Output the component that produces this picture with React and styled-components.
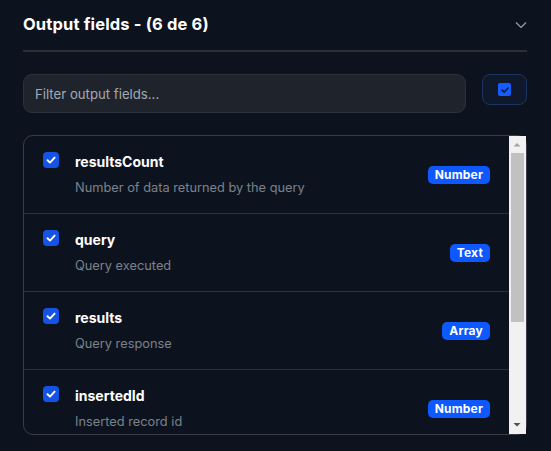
import React from "react";
import styled, { createGlobalStyle } from "styled-components";

const GlobalStyle = createGlobalStyle`
  html, body { margin: 0; padding: 0; background: #0d131e; }
  body { font-family: Inter, "Noto Sans", sans-serif; color: #fff; }
  * { box-sizing: border-box; }
`;

const Panel = styled.div`
  width: 551px;
  height: 451px;
  padding: 0 24px 0 23px;
  background: #0d131e;
  display: flex;
  flex-direction: column;
`;

const Header = styled.div`
  height: 52px;
  padding-bottom: 3px;
  display: flex;
  align-items: center;
  justify-content: space-between;
  border-bottom: 2px solid #2c2f33;
`;

const Title = styled.h2`
  margin: 0;
  font-size: 16.5px;
  font-weight: 700;
  letter-spacing: 0.15px;
  color: #ffffff;
`;

const Chevron = styled.svg`
  width: 12px;
  height: 8px;
  margin: 2px 0 0 0;
`;

const FilterRow = styled.div`
  margin-top: 22px;
  display: flex;
  align-items: flex-start;
  gap: 16px;
`;

const FilterInput = styled.input`
  flex: 1;
  height: 39px;
  border-radius: 9px;
  border: 1px solid #2b3139;
  background: #1f242c;
  padding: 0 11px;
  font-family: inherit;
  font-size: 13.2px;
  color: #fff;
  outline: none;
  &::placeholder { color: #a3aab4; }
`;

const ToggleAll = styled.button`
  width: 45px;
  height: 31px;
  border-radius: 8px;
  border: 1px solid #1d3563;
  background: #0f192b;
  display: flex;
  align-items: center;
  justify-content: center;
  padding: 0;
`;

const SmallCheck = styled.span`
  width: 13px;
  height: 13px;
  border-radius: 2px;
  background: #165dff;
  display: flex;
  align-items: center;
  justify-content: center;
`;

const ListFrame = styled.div`
  margin-top: 22px;
  height: 300px;
  border: 1px solid #3a3e44;
  border-radius: 10px;
  display: flex;
`;

const Rows = styled.div`
  flex: 1;
  min-width: 0;
  overflow: hidden;
`;

const ScrollBar = styled.div`
  width: 17px;
  flex: none;
  background: #f1f1f1;
  display: flex;
  flex-direction: column;
`;

const ScrollButton = styled.svg`
  width: 17px;
  height: 17px;
  flex: none;
  display: block;
`;

const Track = styled.div`
  flex: 1;
  padding: 0 2px;
`;

const Thumb = styled.div`
  height: 169px;
  background: #c1c1c1;
`;

const Row = styled.div`
  display: flex;
  align-items: center;
  padding: 16px 19px 16px 19px;
  border-bottom: 1px solid #2d3136;
  &:last-child { border-bottom: none; }
`;

const CheckBox = styled.span`
  width: 16px;
  height: 16px;
  border-radius: 4px;
  background: #1553e6;
  display: flex;
  align-items: center;
  justify-content: center;
  align-self: flex-start;
  flex: none;
`;

const Info = styled.div`
  flex: 1;
  margin-left: 16px;
  display: flex;
  flex-direction: column;
  gap: 7px;
`;

const Name = styled.div`
  font-size: 14px;
  font-weight: 700;
  line-height: 20px;
  color: #ffffff;
`;

const Desc = styled.div`
  font-size: 12.8px;
  line-height: 18px;
  color: #7b828b;
`;

const Badge = styled.span`
  height: 18px;
  padding: 0 7px;
  border-radius: 5px;
  background: #0d58ff;
  color: #fff;
  font-size: 12px;
  font-weight: 700;
  line-height: 18px;
  letter-spacing: 0.2px;
  flex: none;
`;

const fields = [
  { name: "resultsCount", desc: "Number of data returned by the query", type: "Number" },
  { name: "query", desc: "Query executed", type: "Text" },
  { name: "results", desc: "Query response", type: "Array" },
  { name: "insertedId", desc: "Inserted record id", type: "Number" },
];

const Tick = ({ color, size }) => (
  <svg width={size} height={size} viewBox="0 0 12 12" fill="none">
    <path d="M2.5 6.2 L5 8.6 L9.6 3.6" stroke={color} strokeWidth="1.9" strokeLinecap="round" strokeLinejoin="round" />
  </svg>
);

export default function App() {
  return (
    <>
      <GlobalStyle />
      <Panel>
        <Header>
          <Title>Output fields - (6 de 6)</Title>
          <Chevron viewBox="0 0 12 8" fill="none">
            <path d="M1 1.5 L6 6.5 L11 1.5" stroke="#9aa1aa" strokeWidth="1.2" />
          </Chevron>
        </Header>
        <FilterRow>
          <FilterInput placeholder="Filter output fields..." />
          <ToggleAll>
            <SmallCheck>
              <Tick color="#0c1a33" size={10} />
            </SmallCheck>
          </ToggleAll>
        </FilterRow>
        <ListFrame>
          <Rows>
            {fields.map((f) => (
              <Row key={f.name}>
                <CheckBox>
                  <Tick color="#ffffff" size={12} />
                </CheckBox>
                <Info>
                  <Name>{f.name}</Name>
                  <Desc>{f.desc}</Desc>
                </Info>
                <Badge>{f.type}</Badge>
              </Row>
            ))}
          </Rows>
          <ScrollBar>
            <ScrollButton viewBox="0 0 17 17">
              <polygon points="4.5,10.5 11.5,10.5 8,7" fill="#a3a3a3" />
            </ScrollButton>
            <Track>
              <Thumb />
            </Track>
            <ScrollButton viewBox="0 0 17 17">
              <polygon points="4.5,6 11.5,6 8,9.5" fill="#505050" />
            </ScrollButton>
          </ScrollBar>
        </ListFrame>
      </Panel>
    </>
  );
}
